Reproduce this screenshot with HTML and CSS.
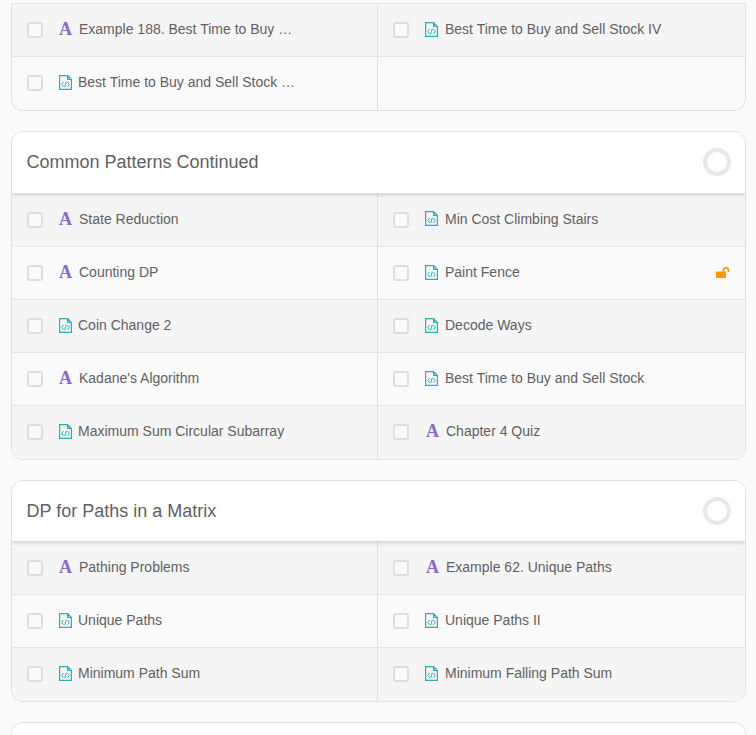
FILE: index.html
```html
<!DOCTYPE html>
<html lang="en">
<head>
    <meta charset="UTF-8">
    <meta name="viewport" content="width=device-width, initial-scale=1.0">
    <title>Dynamic Programming Chapters</title>
    <link rel="stylesheet" href="styles.css">
</head>
<body>
    <svg class="icon-defs" width="0" height="0" aria-hidden="true">
        <symbol id="file-code" viewBox="0 0 13 15">
            <path d="M.6.6h8l3.8 3.8v10H.6z M8.6.6v3.8h3.8" fill="none" stroke="#2ab0b4" stroke-width="1.2"/>
            <path d="M4.6 7 2.7 9.4l1.9 2.4M8.4 7l1.9 2.4-1.9 2.4M7.3 6.6 5.7 12.2" fill="none" stroke="#2ab0c8" stroke-width="1"/>
        </symbol>
    </svg>

    <div class="page">
        <section class="chapter chapter-cut">
            <div class="rows">
                <div class="row"><span class="check"></span><span class="icon-article">A</span><span class="label">Example 188. Best Time to Buy …</span></div>
                <div class="row"><span class="check"></span><svg class="icon-code"><use href="#file-code"/></svg><span class="label">Best Time to Buy and Sell Stock IV</span></div>
                <div class="row"><span class="check"></span><svg class="icon-code"><use href="#file-code"/></svg><span class="label">Best Time to Buy and Sell Stock …</span></div>
                <div class="row row-empty"></div>
            </div>
        </section>

        <section class="chapter">
            <header class="chapter-head">
                <h2>Common Patterns Continued</h2>
                <span class="progress"></span>
            </header>
            <div class="rows">
                <div class="row"><span class="check"></span><span class="icon-article">A</span><span class="label">State Reduction</span></div>
                <div class="row"><span class="check"></span><svg class="icon-code"><use href="#file-code"/></svg><span class="label">Min Cost Climbing Stairs</span></div>
                <div class="row"><span class="check"></span><span class="icon-article">A</span><span class="label">Counting DP</span></div>
                <div class="row"><span class="check"></span><svg class="icon-code"><use href="#file-code"/></svg><span class="label">Paint Fence</span>
                    <svg class="icon-lock" viewBox="0 0 14 11"><rect x="0" y="4.5" width="10" height="6.5"/><path d="M7.4 5V3.2a2.5 2.5 0 0 1 5 0V5" fill="none" stroke="currentColor" stroke-width="1.6"/></svg>
                </div>
                <div class="row"><span class="check"></span><svg class="icon-code"><use href="#file-code"/></svg><span class="label">Coin Change 2</span></div>
                <div class="row"><span class="check"></span><svg class="icon-code"><use href="#file-code"/></svg><span class="label">Decode Ways</span></div>
                <div class="row"><span class="check"></span><span class="icon-article">A</span><span class="label">Kadane's Algorithm</span></div>
                <div class="row"><span class="check"></span><svg class="icon-code"><use href="#file-code"/></svg><span class="label">Best Time to Buy and Sell Stock</span></div>
                <div class="row"><span class="check"></span><svg class="icon-code"><use href="#file-code"/></svg><span class="label">Maximum Sum Circular Subarray</span></div>
                <div class="row"><span class="check"></span><span class="icon-article">A</span><span class="label">Chapter 4 Quiz</span></div>
            </div>
        </section>

        <section class="chapter">
            <header class="chapter-head chapter-head-short">
                <h2>DP for Paths in a Matrix</h2>
                <span class="progress"></span>
            </header>
            <div class="rows">
                <div class="row"><span class="check"></span><span class="icon-article">A</span><span class="label">Pathing Problems</span></div>
                <div class="row"><span class="check"></span><span class="icon-article">A</span><span class="label">Example 62. Unique Paths</span></div>
                <div class="row"><span class="check"></span><svg class="icon-code"><use href="#file-code"/></svg><span class="label">Unique Paths</span></div>
                <div class="row"><span class="check"></span><svg class="icon-code"><use href="#file-code"/></svg><span class="label">Unique Paths II</span></div>
                <div class="row"><span class="check"></span><svg class="icon-code"><use href="#file-code"/></svg><span class="label">Minimum Path Sum</span></div>
                <div class="row"><span class="check"></span><svg class="icon-code"><use href="#file-code"/></svg><span class="label">Minimum Falling Path Sum</span></div>
            </div>
        </section>

        <section class="chapter">
            <header class="chapter-head"></header>
        </section>
    </div>
</body>
</html>
```

FILE: styles.css
```css
html, body {
    height: 100%;
    margin: 0;
    overflow: hidden;
}

body {
    font-family: 'Liberation Sans', Arial, sans-serif;
    background-color: #fafafa;
    color: #616161;
}

.icon-defs {
    position: absolute;
}

.page {
    display: flex;
    flex-direction: column;
    gap: 20px;
    padding: 3px 10px 0 11px;
}

.chapter {
    background-color: #fafafa;
    border: 1px solid #e0e0e0;
    border-radius: 12px;
    overflow: hidden;
}

.chapter-cut {
    border-top: none;
    border-radius: 0 0 12px 12px;
}

.chapter-head {
    display: flex;
    justify-content: space-between;
    align-items: center;
    height: 61px;
    padding: 0 14px 0 14.5px;
    box-sizing: border-box;
    background-color: white;
    box-shadow: 0 2px 4px rgba(0,0,0,0.15);
    position: relative;
}

.chapter-head-short {
    height: 60px;
}

.chapter-head h2 {
    margin: 0;
    font-size: 18px;
    font-weight: 400;
    color: #616161;
}

.progress {
    width: 28px;
    height: 28px;
    margin-top: -1px;
    border: 4px solid #e8e8e8;
    border-radius: 50%;
    box-sizing: border-box;
}

.rows {
    display: grid;
    grid-template-columns: 366px 1fr;
}

.row {
    display: flex;
    align-items: center;
    height: 53px;
    padding: 0 15px;
    box-sizing: border-box;
    border-top: 1px solid #e4e4e4;
    min-width: 0;
}

.chapter-head + .rows .row:nth-child(-n+2) {
    border-top: none;
}

.row:nth-last-child(-n+2) {
    height: 54px;
    padding-bottom: 1px;
}

.row:nth-child(odd) {
    border-right: 1px solid #e0e0e0;
}

.row:nth-child(4n+1),
.row:nth-child(4n+2) {
    background-color: #f5f5f5;
}

.check {
    flex: none;
    width: 16px;
    height: 16px;
    margin-right: 16px;
    border: 2px solid #dedede;
    border-radius: 3px;
    box-sizing: border-box;
    background-color: #fafafa;
}

.row:nth-child(odd) .check {
    margin-right: 15px;
}

.icon-article {
    flex: none;
    width: 15px;
    margin: -2px 6px 0 0;
    font-family: 'Liberation Serif', serif;
    font-size: 18px;
    font-weight: 700;
    line-height: 1;
    color: #8a68d0;
    text-align: center;
}

.icon-code {
    flex: none;
    width: 13px;
    height: 15px;
    margin: -2px 7px 0 0;
}

.row:nth-child(odd) .icon-code {
    margin: -2px 6px 0 1px;
}

.label {
    font-size: 14px;
    line-height: 20px;
    margin-top: -2px;
    white-space: nowrap;
}

.icon-lock {
    flex: none;
    width: 14px;
    height: 11px;
    margin: -2px 0 0 auto;
    color: #ff9800;
    fill: currentColor;
}
```
